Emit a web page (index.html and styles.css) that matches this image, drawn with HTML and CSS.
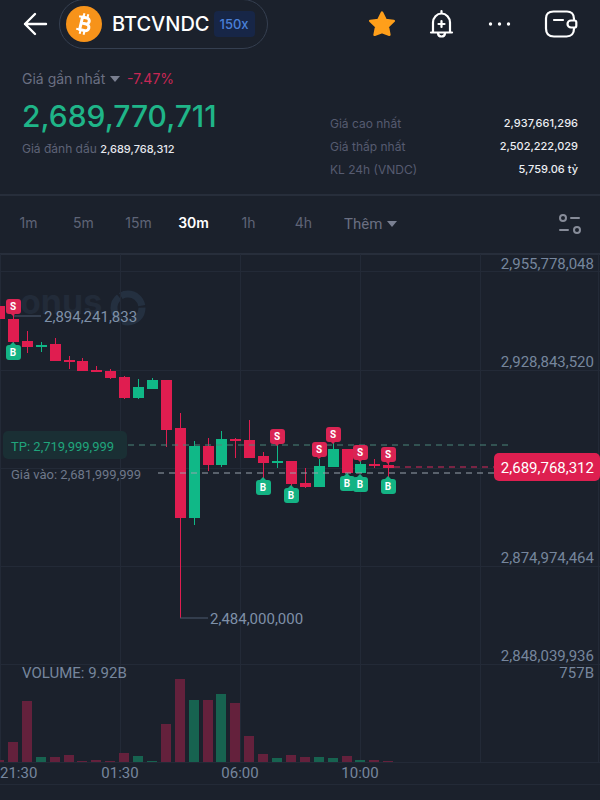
FILE: index.html
```html
<!DOCTYPE html>
<html lang="vi">
<head>
  <meta charset="UTF-8">
  <meta name="viewport" content="width=device-width, initial-scale=1">
  <title>BTCVNDC 150x</title>
  <link rel="stylesheet" href="styles.css">
</head>
<body>

  <header class="topbar">
    <button class="icon-btn" aria-label="Quay lại">
      <svg width="24" height="24" viewBox="0 0 24 24" fill="none" stroke="#fff" stroke-width="2.4" stroke-linecap="round" stroke-linejoin="round">
        <path d="M23 12H2M12 2L2 12l10 10"/>
      </svg>
    </button>

    <button class="pair">
      <svg width="36" height="36" viewBox="0 0 36 36">
        <circle cx="18" cy="18" r="18" fill="#f7931a"/>
        <g transform="rotate(13 18 18)" fill="none" stroke="#fff">
          <path stroke-width="3" stroke-linejoin="round" d="M15 11.500h4.500a3 3 0 0 1 0 6H15zM15 17.500h5.200a3.400 3.400 0 0 1 0 6.800H15z"/>
          <path stroke-width="2" d="M11.500 11.500H15M11.500 24.300H15M16 7.500v4M20 7.500v4M16 24v4.500M20 24v4.500"/>
        </g>
      </svg>
      <span class="pair-name">BTCVNDC</span>
      <span class="leverage">150x</span>
    </button>

    <nav class="actions">
      <button class="icon-btn" aria-label="Yêu thích">
        <svg width="28" height="28" viewBox="0 0 28 28">
          <path fill="#ff9f1a" stroke="#ff9f1a" stroke-width="2.500" stroke-linejoin="round" d="M14 2.500l3.600 7.400 8.200 1-6 5.700 1.600 8.200L14 22l-7.400 2.800 1.600-8.200-6-5.700 8.200-1z"/>
        </svg>
      </button>
      <button class="icon-btn" aria-label="Cảnh báo giá">
        <svg width="24" height="28" viewBox="0 0 24 28" fill="none" stroke="#fff" stroke-width="2.200" stroke-linecap="round" stroke-linejoin="round">
          <path d="M11.500 1v2M3 22V12.500a8.500 9 0 0 1 17 0V22M1 22.500h21M8 23.500c.5 4 6.500 4 7 0M11.500 11v6M8.500 14h6"/>
        </svg>
      </button>
      <button class="icon-btn" aria-label="Thêm tùy chọn">
        <svg width="24" height="28" viewBox="0 0 24 28" fill="#fff">
          <circle cx="2.500" cy="14" r="1.700"/>
          <circle cx="11.500" cy="14" r="1.700"/>
          <circle cx="20.500" cy="14" r="1.700"/>
        </svg>
      </button>
      <button class="icon-btn" aria-label="Ví">
        <svg width="32" height="28" viewBox="0 0 32 28" fill="none" stroke="#fff" stroke-width="2.200" stroke-linecap="round" stroke-linejoin="round">
          <path d="M28 10.500V9c0-5-3-7.500-7-7.500H7.500C2.500 1.500 0 4 0 8.500v10C0 24 2.500 26.500 8 26.500h12.500c5 0 7.500-3 7.500-8v-1M28.500 10.500H25a3.500 3.500 0 0 0 0 7h3.500c1.300 0 1.800-.5 1.800-1.800v-3.400c0-1.300-.5-1.800-1.800-1.800zM8 10h9"/>
        </svg>
      </button>
    </nav>
  </header>

  <section class="summary">
    <div class="last">
      <div class="last-head">
        <label class="dropdown">
          <select aria-label="Loại giá">
            <option>Giá gần nhất</option>
          </select>
          <svg width="12" height="8" viewBox="0 0 12 8"><path d="M1 1h10L6 7z" fill="#7a7f90"/></svg>
        </label>
        <span class="change">-7.47%</span>
      </div>
      <div class="price">2,689,770,711</div>
      <div class="mark">Giá đánh dấu <b>2,689,768,312</b></div>
    </div>
    <dl class="stats">
      <div><dt>Giá cao nhất</dt><dd>2,937,661,296</dd></div>
      <div><dt>Giá thấp nhất</dt><dd>2,502,222,029</dd></div>
      <div><dt>KL 24h (VNDC)</dt><dd>5,759.06 tỷ</dd></div>
    </dl>
  </section>

  <nav class="ranges">
    <button>1m</button>
    <button>5m</button>
    <button>15m</button>
    <button class="active">30m</button>
    <button>1h</button>
    <button>4h</button>
    <label class="dropdown more">
      <select aria-label="Khung thời gian khác">
        <option>Thêm</option>
      </select>
      <svg width="12" height="8" viewBox="0 0 12 8"><path d="M1 1h10L6 7z" fill="#7a8092"/></svg>
    </label>
    <button class="settings" aria-label="Cài đặt biểu đồ">
      <svg width="22" height="22" viewBox="0 0 22 22" fill="none" stroke="#878c99" stroke-width="2" stroke-linecap="round">
        <circle cx="4" cy="5" r="3"/>
        <path d="M12 5h8M1 17h8"/>
        <circle cx="18" cy="17" r="3"/>
      </svg>
    </button>
  </nav>

  <main>
    <svg class="chart" viewBox="0 0 600 540">
      <g class="watermark">
        <text x="20" y="60">onus</text>
        <circle cx="128" cy="54" r="14"/>
      </g>
      <g id="grid"></g>
      <g id="volume"></g>
      <g id="candles"></g>

      <g class="callout">
        <path d="M14 62h27M180 364h28"/>
        <text x="44" y="68">2,894,241,833</text>
        <text x="210" y="370">2,484,000,000</text>
      </g>

      <path class="tp-line" d="M128 191h380"/>
      <path class="entry-line" d="M158 219h337"/>
      <path class="last-line" d="M394 213h100"/>
      <rect class="tp-box" x="3" y="177" width="124" height="28" rx="5"/>
      <text class="tp-text" x="11" y="197">TP: 2,719,999,999</text>
      <text class="entry-text" x="11" y="225">Giá vào: 2,681,999,999</text>

      <g id="markers"></g>

      <g class="axis">
        <text class="end" x="594" y="15">2,955,778,048</text>
        <text class="end" x="594" y="113">2,928,843,520</text>
        <text class="end" x="594" y="309">2,874,974,464</text>
        <text class="end" x="594" y="407">2,848,039,936</text>
        <text class="end" x="594" y="424">757B</text>
        <text x="22" y="424">VOLUME: 9.92B</text>
        <text x="0" y="524">21:30</text>
        <text class="mid" x="120" y="524">01:30</text>
        <text class="mid" x="240" y="524">06:00</text>
        <text class="mid" x="360" y="524">10:00</text>
      </g>

      <rect class="last-box" x="494" y="199" width="106" height="28" rx="5"/>
      <text class="last-text" x="594" y="219">2,689,768,312</text>
    </svg>
  </main>

  <script src="chart.js"></script>
</body>
</html>
```

FILE: styles.css
```css
* {
  box-sizing: border-box;
}

body {
  margin: 0;
  background-color: #1b212c;
  color: #fff;
  font-family: Inter, "Liberation Sans", sans-serif;
  font-size: 14px;
}

button, select {
  background: none;
  border: none;
  padding: 0;
  margin: 0;
  color: inherit;
  font: inherit;
  cursor: pointer;
}

select {
  appearance: none;
}

svg {
  display: block;
}

/* header */
.topbar {
  display: flex;
  align-items: center;
  height: 48px;
  padding: 0 22px 0 23px;
}

.icon-btn svg {
  overflow: visible;
}

.pair {
  display: flex;
  align-items: center;
  height: 50px;
  margin-left: 12px;
  padding: 0 12px 0 6px;
  border: 1px solid #353f50;
  border-radius: 25px;
}

.pair-name {
  margin-left: 10px;
  font-size: 20px;
  font-weight: 500;
}

.leverage {
  margin-left: 4px;
  padding: 0 6px;
  border-radius: 4px;
  background-color: #172647;
  color: #4a80d8;
  font-size: 13px;
  font-weight: 500;
  line-height: 26px;
}

.actions {
  display: flex;
  gap: 34px;
  margin-left: auto;
}

/* prices */
.summary {
  display: flex;
  justify-content: space-between;
  padding: 21px 22px 13px;
  border-bottom: 2px solid #272e3b;
}

.last-head {
  display: flex;
  gap: 6px;
  line-height: 20px;
}

.dropdown {
  display: flex;
  align-items: center;
  gap: 3px;
  color: #6a6f82;
}

.change {
  color: #c72755;
}

.price {
  margin: 7px 0 3px;
  color: #1fb588;
  font-size: 30px;
  font-weight: 500;
  line-height: 40px;
}

.mark {
  color: #5e6377;
  font-size: 12px;
  line-height: 20px;
}

.mark b {
  color: #e6e8ee;
  font-size: 11px;
  font-weight: 500;
}

.stats {
  width: 248px;
  margin: 43px 0 0;
  font-size: 12px;
  line-height: 23px;
}

.stats div {
  display: flex;
  justify-content: space-between;
}

.stats dt {
  color: #565b70;
}

.stats dd {
  margin: 0;
  color: #eceef3;
  font-size: 11px;
  font-weight: 500;
}

/* time ranges */
.ranges {
  display: flex;
  align-items: center;
  height: 59px;
  padding: 0 19px 5px 1px;
  border-bottom: 2px solid #272e3b;
  color: #5f6477;
}

.ranges button {
  width: 55px;
}

.ranges .active {
  color: #fff;
  font-weight: 600;
}

.ranges .more {
  margin: 4px 0 0 13px;
  font-family: Roboto, sans-serif;
  font-size: 15px;
}

.ranges .settings {
  width: 22px;
  margin: 4px 0 0 auto;
}

/* chart */
.chart {
  width: 100%;
  margin-top: -1px;
  font-family: Roboto, sans-serif;
  font-size: 15px;
}

.watermark text {
  fill: #222b39;
  font-family: Inter, sans-serif;
  font-size: 34px;
  font-weight: 700;
}

.watermark circle {
  fill: none;
  stroke: #243040;
  stroke-width: 7;
  stroke-dasharray: 27 2;
}

.grid-line {
  stroke: #232a37;
}

.up {
  fill: #10b887;
  stroke: #10b887;
}

.down {
  fill: #e01d50;
  stroke: #e01d50;
}

.body {
  stroke: none;
}

.vol-up {
  fill: #176350;
}

.vol-down {
  fill: #64213c;
}

.marker-s {
  fill: #da2453;
}

.marker-b {
  fill: #14b384;
}

.marker-text {
  fill: #fff;
  font-size: 10px;
  font-weight: 700;
  text-anchor: middle;
}

.callout path {
  stroke: #4c5a6e;
}

.callout text {
  fill: #7f90a8;
}

.axis text {
  fill: #76869d;
}

.axis .end {
  text-anchor: end;
}

.axis .mid {
  text-anchor: middle;
}

.tp-line {
  stroke: #4a8578;
  stroke-dasharray: 6 5;
}

.entry-line {
  stroke: #98a2ab;
  stroke-dasharray: 6 5;
}

.last-line {
  stroke: #d8285a;
  stroke-dasharray: 6 5;
}

.tp-box {
  fill: #1a2f34;
}

.tp-text {
  fill: #20a57c;
  font-size: 13px;
}

.entry-text {
  fill: #6f788a;
  font-size: 13px;
}

.last-box {
  fill: #de1f50;
}

.last-text {
  fill: #fff;
  text-anchor: end;
}
```

FILE: chart.js
```js
const STEP = 13.9;
const VOLUME_BASE = 508;

// direction, high, body top, body bottom, low, volume
const candles = [
  ['down', 52, 52, 65, 65, 2],
  ['down', 56, 65, 88, 92, 20],
  ['down', 77, 87, 93, 99, 61],
  ['up', 88, 91, 93, 98, 5],
  ['down', 84, 90, 107, 107, 5],
  ['down', 102, 106, 108, 115, 7],
  ['down', 104, 107, 117, 117, 1],
  ['down', 112, 116, 118, 118, 2],
  ['down', 115, 117, 124, 125, 1],
  ['down', 122, 123, 144, 145, 9],
  ['up', 125, 133, 144, 145, 6],
  ['up', 124, 126, 135, 135, 1],
  ['down', 126, 126, 176, 193, 38],
  ['down', 159, 174, 264, 364, 83],
  ['up', 187, 192, 264, 271, 62],
  ['down', 184, 192, 211, 217, 62],
  ['up', 177, 185, 211, 213, 68],
  ['down', 184, 185, 187, 204, 59],
  ['down', 166, 186, 204, 204, 26],
  ['down', 198, 202, 209, 224, 8],
  ['up', 191, 207, 209, 214, 4],
  ['down', 207, 207, 230, 233, 7],
  ['down', 214, 229, 233, 234, 5],
  ['up', 205, 212, 233, 233, 5],
  ['up', 189, 195, 213, 213, 4],
  ['down', 195, 195, 219, 221, 6],
  ['up', 207, 210, 219, 219, 2],
  ['down', 205, 210, 212, 214, 2],
  ['down', 207, 211, 214, 224, 1],
];

// candle index, side, y of the badge centre
const markers = [
  [1, 'S', 52], [1, 'B', 98],
  [19, 'B', 233], [20, 'S', 182], [21, 'B', 241],
  [23, 'S', 195], [24, 'S', 180], [25, 'B', 229],
  [26, 'B', 230], [26, 'S', 198], [28, 'S', 200], [28, 'B', 232],
];

function centre(i) {
  return Math.round(i * STEP - 1);
}

function draw(id, markup) {
  document.getElementById(id).innerHTML = markup.join('');
}

const grid = [];
[0, 120, 240, 360, 480, 598].forEach(x => {
  grid.push(`<path class="grid-line" d="M${x}.5 0V508"/>`);
});
[17, 116, 214, 312, 410, 508, 530].forEach(y => {
  grid.push(`<path class="grid-line" d="M0 ${y}.5H600"/>`);
});
draw('grid', grid);

draw('volume', candles.map((c, i) =>
  `<rect class="vol-${c[0]}" x="${centre(i) - 5}" y="${VOLUME_BASE - c[5]}" width="10" height="${c[5]}"/>`
));

draw('candles', candles.map((c, i) => {
  const [dir, high, top, bottom, low] = c;
  const x = centre(i);
  return `<g class="${dir}">
    <path d="M${x}.5 ${high}V${low}"/>
    <rect class="body" x="${x - 5}" y="${top}" width="11" height="${bottom - top}"/>
  </g>`;
}));

draw('markers', markers.map(([i, side, y]) => {
  const x = centre(i);
  const tip = side === 'S' ? `M${x - 3} ${y + 7}h6l-3 3z` : `M${x - 3} ${y - 7}h6l-3 -3z`;
  return `<g class="marker-${side.toLowerCase()}">
    <rect x="${x - 7}" y="${y - 7}" width="15" height="15" rx="3"/>
    <path d="${tip}"/>
    <text class="marker-text" x="${x}" y="${y + 4}">${side}</text>
  </g>`;
}));
```
